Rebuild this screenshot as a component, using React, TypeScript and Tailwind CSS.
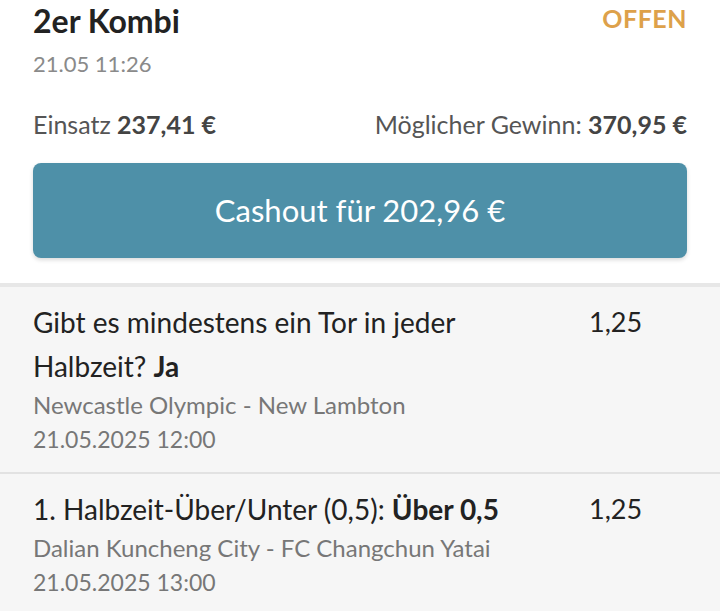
import React from 'react';

const BetSlip = () => {
  const selections = [
    {
      market: 'Gibt es mindestens ein Tor in jeder Halbzeit?',
      pick: 'Ja',
      match: 'Newcastle Olympic - New Lambton',
      date: '21.05.2025 12:00',
      odds: '1,25'
    },
    {
      market: '1. Halbzeit-Über/Unter (0,5):',
      pick: 'Über 0,5',
      match: 'Dalian Kuncheng City - FC Changchun Yatai',
      date: '21.05.2025 13:00',
      odds: '1,25'
    }
  ];

  return (
    <div className="w-[720px] h-[611px] overflow-hidden bg-[#f6f6f6] font-['Lato',sans-serif]">
      <div className="bg-white px-[33px] pt-[3px] pb-[25px]">
        <div className="flex justify-between items-start">
          <h2 className="text-[32px] leading-[36px] font-bold text-[#222]">2er Kombi</h2>
          <span className="text-[25px] leading-[30px] font-bold text-[#dda14a] tracking-[0.5px]">OFFEN</span>
        </div>
        <p className="mt-[10px] text-[22px] leading-[30px] text-[#8a8a8a]">21.05 11:26</p>

        <div className="mt-[30px] flex justify-between text-[25px] leading-[30px] text-[#555]">
          <p>
            Einsatz <span className="font-bold text-[#444]">237,41 €</span>
          </p>
          <p>
            Möglicher Gewinn: <span className="font-bold text-[#444]">370,95 €</span>
          </p>
        </div>

        <button className="mt-[24px] w-full h-[95px] rounded-[8px] bg-[#4e90a8] text-white text-[31px] shadow-[0_2px_4px_rgba(0,0,0,0.15)]">
          Cashout für 202,96 €
        </button>
      </div>

      <div className="border-t-4 border-[#e7e7e7]">
        {selections.map((sel, index) => (
          <div
            key={index}
            className={`flex px-[33px] pt-[13px] pb-[16px] ${index > 0 ? 'border-t-2 border-[#e2e2e2]' : ''}`}
          >
            <div className="w-[527px] shrink-0">
              <p className="text-[28px] leading-[44px] text-[#222]">
                {sel.market} <span className="font-bold">{sel.pick}</span>
              </p>
              <p className="text-[24px] leading-[34px] text-[#777]">{sel.match}</p>
              <p className="text-[23px] leading-[34px] text-[#777]">{sel.date}</p>
            </div>
            <div className="ml-[29px] text-[27px] leading-[44px] text-[#222]">{sel.odds}</div>
          </div>
        ))}
      </div>
    </div>
  );
};

export default function App() {
  return <BetSlip />;
}
